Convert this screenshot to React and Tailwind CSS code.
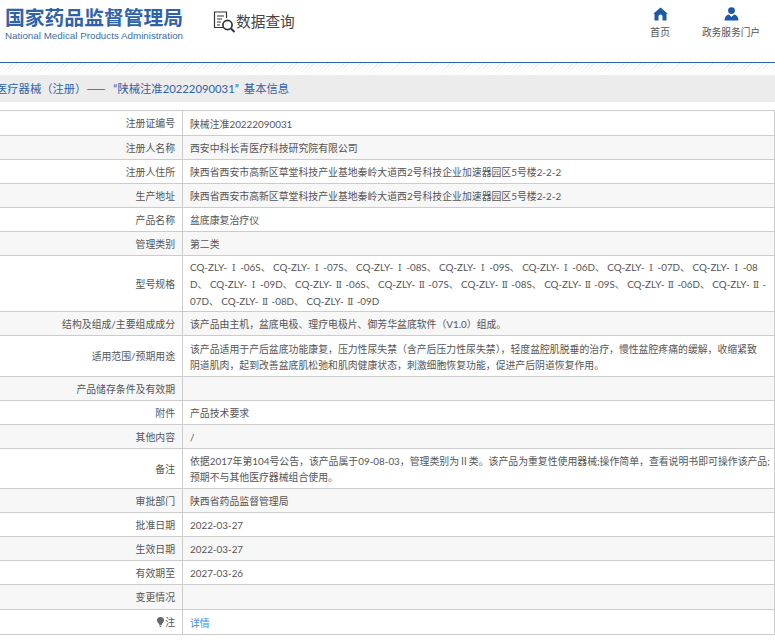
const cjk = 'Lato,"Noto Sans CJK SC",sans-serif';

const rows = [
  { label: '注册证编号', h: 'h-[25px]', value: '陕械注准20222090031' },
  { label: '注册人名称', h: 'h-[24px]', value: '西安中科长青医疗科技研究院有限公司' },
  { label: '注册人住所', h: 'h-[24px]', value: '陕西省西安市高新区草堂科技产业基地秦岭大道西2号科技企业加速器园区5号楼2-2-2' },
  { label: '生产地址', h: 'h-[24px]', value: '陕西省西安市高新区草堂科技产业基地秦岭大道西2号科技企业加速器园区5号楼2-2-2' },
  { label: '产品名称', h: 'h-[24px]', value: '盆底康复治疗仪' },
  { label: '管理类别', h: 'h-[24px]', value: '第二类' },
  {
    label: '型号规格',
    h: 'h-[56px]',
    models: true,
    lines: [
      'CQ-ZLY-Ⅰ-06S、 CQ-ZLY-Ⅰ-07S、 CQ-ZLY-Ⅰ-08S、 CQ-ZLY-Ⅰ-09S、 CQ-ZLY-Ⅰ-06D、 CQ-ZLY-Ⅰ-07D、 CQ-ZLY-Ⅰ-08',
      'D、 CQ-ZLY-Ⅰ-09D、 CQ-ZLY-Ⅱ-06S、 CQ-ZLY-Ⅱ-07S、 CQ-ZLY-Ⅱ-08S、 CQ-ZLY-Ⅱ-09S、 CQ-ZLY-Ⅱ-06D、 CQ-ZLY-Ⅱ-',
      '07D、 CQ-ZLY-Ⅱ-08D、 CQ-ZLY-Ⅱ-09D',
    ],
  },
  { label: '结构及组成/主要组成成分', h: 'h-[24px]', value: '该产品由主机，盆底电极、理疗电极片、御芳华盆底软件（V1.0）组成。' },
  {
    label: '适用范围/预期用途',
    h: 'h-[41px]',
    lines: [
      '该产品适用于产后盆底功能康复，压力性尿失禁（含产后压力性尿失禁），轻度盆腔肌脱垂的治疗，慢性盆腔疼痛的缓解，收缩紧致',
      '阴道肌肉，起到改善盆底肌松弛和肌肉健康状态，刺激细胞恢复功能，促进产后阴道恢复作用。',
    ],
  },
  { label: '产品储存条件及有效期', h: 'h-[24px]', value: '' },
  { label: '附件', h: 'h-[24px]', value: '产品技术要求' },
  { label: '其他内容', h: 'h-[24px]', value: '/' },
  {
    label: '备注',
    h: 'h-[40px]',
    lines: [
      '依据2017年第104号公告，该产品属于09-08-03，管理类别为Ⅱ类。该产品为重复性使用器械;操作简单，查看说明书即可操作该产品;',
      '预期不与其他医疗器械组合使用。',
    ],
  },
  { label: '审批部门', h: 'h-[24px]', value: '陕西省药品监督管理局' },
  { label: '批准日期', h: 'h-[24px]', value: '2022-03-27' },
  { label: '生效日期', h: 'h-[24px]', value: '2022-03-27' },
  { label: '有效期至', h: 'h-[24px]', value: '2027-03-26' },
  { label: '变更情况', h: 'h-[25px]', value: '' },
  { label: '注', h: 'h-[25px]', note: true },
];

// 罗马数字在型号里占满一个汉字宽
const Numerals = ({ text }) =>
  text.split(/([ⅠⅡ])/).map((part, i) =>
    part === 'Ⅰ' || part === 'Ⅱ' ? (
      <span key={i} className="inline-block w-[13px] text-center font-['DejaVu_Serif'] text-[9px]">{part}</span>
    ) : (
      part
    )
  );

const HomeIcon = () => (
  <svg width="15" height="14" viewBox="0 0 15 14" fill="#1c5aa8">
    <path d="M7.5 0.5 L14.5 6.5 L13.5 7 V13.5 H9.5 V9.5 A2 2 0 0 0 5.5 9.5 V13.5 H1.5 V7 L0.5 6.5 Z" />
  </svg>
);

const UserIcon = () => (
  <svg width="15" height="14" viewBox="0 0 15 14" fill="#1c5aa8">
    <circle cx="7.5" cy="3.6" r="3.4" />
    <path d="M0.5 13.5 C0.5 10 2.5 8 5 7.6 L7.5 10 L10 7.6 C12.5 8 14.5 10 14.5 13.5 Z" />
  </svg>
);

const SearchDocIcon = () => (
  <svg width="23" height="23" viewBox="0 0 23 23" fill="none" stroke="#333" strokeWidth="1.2">
    <path d="M11 16.5 H1.5 V1 H13.5 V7" />
    <path d="M4 5 H11 M4 8 H9 M4 11 H8 M4 14 H7" />
    <circle cx="14.5" cy="14" r="4.6" strokeWidth="1.7" />
    <path d="M18 17.5 L21.5 21" strokeWidth="2" />
  </svg>
);

const BulbIcon = () => (
  <svg width="7" height="10" viewBox="0 0 7 10" fill="#666" className="inline-block mr-[1px] mb-[1px]">
    <path d="M3.5 0 A3.5 3.5 0 0 1 7 3.5 C7 5.4 5 6 4.6 8 H2.4 C2 6 0 5.4 0 3.5 A3.5 3.5 0 0 1 3.5 0 Z" />
    <rect x="2.6" y="8.6" width="1.8" height="1.2" />
  </svg>
);

export default function App() {
  return (
    <div className="w-[775px] h-[642px] overflow-hidden bg-white" style={{ fontFamily: cjk }}>
      {/* 顶部 */}
      <header className="flex h-[62px]">
        <div className="w-[236px] pl-[5px] pt-[5px] shrink-0">
          <div className="text-[19.8px] leading-[24px] font-bold text-[#2f62a8] whitespace-nowrap">国家药品监督管理局</div>
          <div className="text-[9.8px] leading-[12px] mt-[1px] text-[#3a6ea8] whitespace-nowrap" style={{ fontFamily: '"Liberation Sans",sans-serif' }}>
            National Medical Products Administration
          </div>
        </div>
        <div className="flex items-start pt-[11px] -ml-[23px]">
          <SearchDocIcon />
          <span className="text-[14.7px] leading-[20px] text-[#444] whitespace-nowrap">数据查询</span>
        </div>
        <nav className="ml-auto flex">
          <a className="w-[50px] flex flex-col items-center pt-[7px] text-[10px] leading-[14px] text-[#555]">
            <HomeIcon />
            <span className="mt-[4px]">首页</span>
          </a>
          <a className="w-[72px] mr-[8px] ml-[10px] flex flex-col items-center pt-[7px] text-[9.7px] leading-[14px] text-[#555] whitespace-nowrap">
            <UserIcon />
            <span className="mt-[4px]">政务服务门户</span>
          </a>
        </nav>
      </header>
      <div className="h-px bg-[#2a68a8]"></div>
      <div className="h-[12px] bg-[linear-gradient(to_bottom,rgba(255,255,255,0.2),#ffffff),repeating-linear-gradient(135deg,#e6e6e6_0,#e6e6e6_1px,#ffffff_1px,#ffffff_3px)]"></div>

      {/* 标题 */}
      <div className="h-[27px] bg-[#ececec] -ml-[4px] text-[11.3px] leading-[27px] text-[#2f62a8] whitespace-nowrap">
        医疗器械（注册）<span className="font-['Noto_Sans_CJK_SC'] mr-[8px]">——</span>“陕械注准20222090031”<span className="ml-[5px]">基本信息</span>
      </div>

      {/* 基本信息 */}
      <div className="mt-[8px] w-[775px] border-t border-r border-[#cccccc] text-[9.87px] text-[#555]">
        {rows.map((row, i) => (
          <div key={row.label} className={`flex border-b border-[#cccccc] ${row.h} ${i % 2 ? 'bg-[#f7f7f7]' : 'bg-white'}`}>
            <div className="w-[183px] shrink-0 flex items-center justify-end pr-[7px] pt-px border-r border-[#cccccc] whitespace-nowrap">
              {row.note && <BulbIcon />}
              {row.label}
            </div>
            <div className="flex-1 min-w-0 pl-[7px] pt-px flex flex-col justify-center whitespace-nowrap leading-[16px]">
              {row.note ? (
                <a className="text-[#3c8ae6]">详情</a>
              ) : row.lines ? (
                row.lines.map((line) => <div key={line}>{row.models ? <Numerals text={line} /> : line}</div>)
              ) : (
                row.value
              )}
            </div>
          </div>
        ))}
      </div>
    </div>
  );
}
